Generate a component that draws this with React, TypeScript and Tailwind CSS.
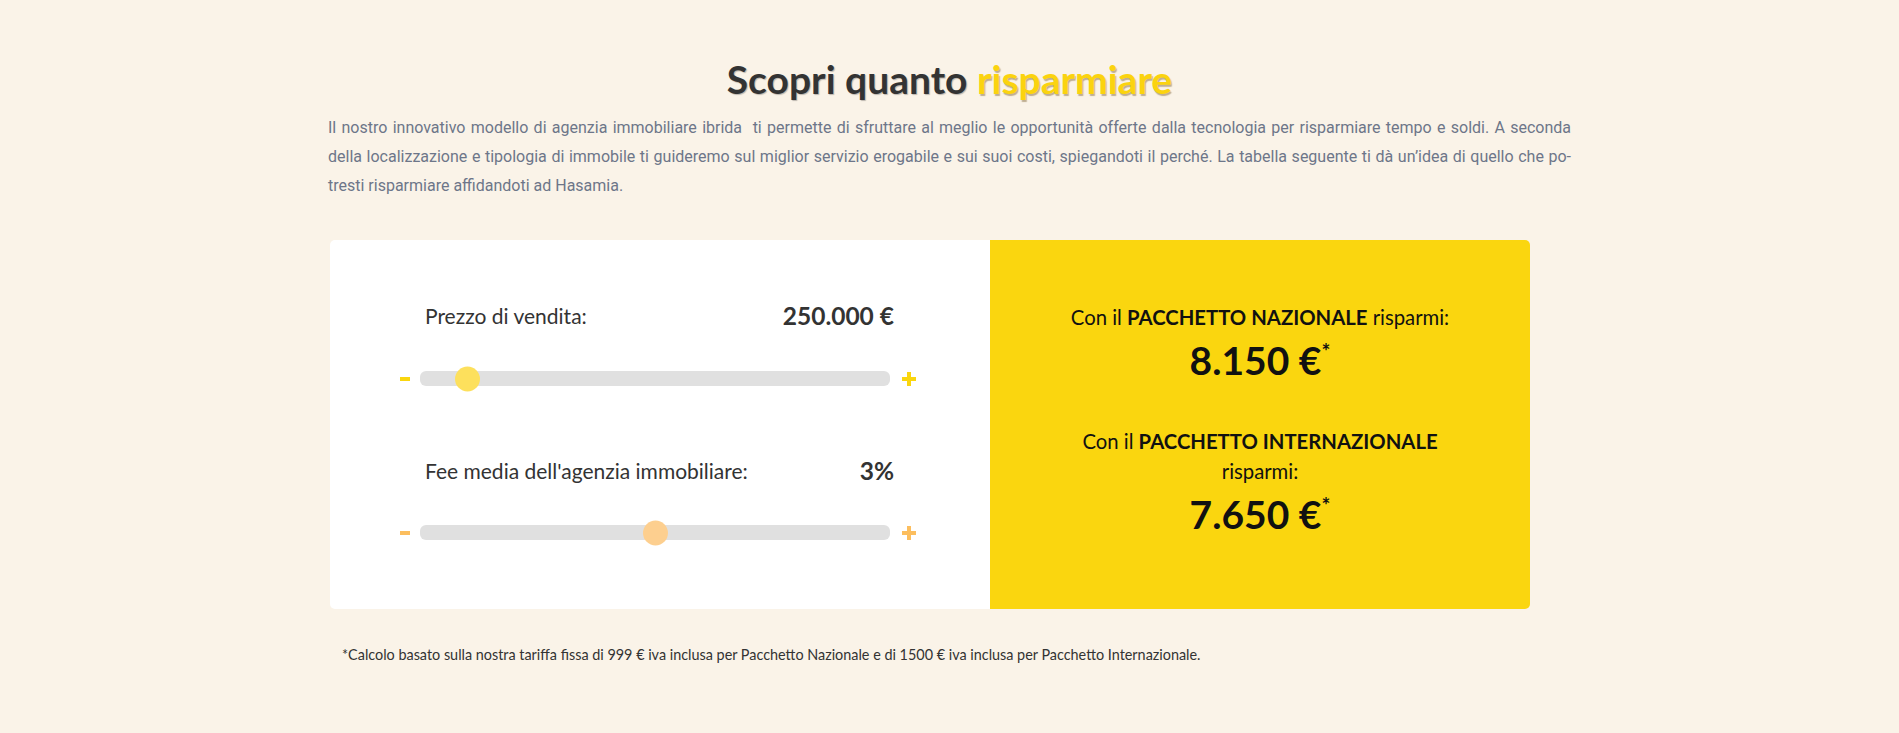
import React, { useState } from "react";

const ubuntu = "font-['Lato','Noto_Sans',sans-serif]";

const formatEuro = (n: number) => n.toLocaleString("it-IT").replace(/,/g, ".") + " €";

interface SliderProps {
  value: number;
  min: number;
  max: number;
  step: number;
  onChange: (v: number) => void;
  thumbClass: string;
  signClass: string;
}

const Slider: React.FC<SliderProps> = ({ value, min, max, step, onChange, thumbClass, signClass }) => {
  const pct = (value - min) / (max - min);
  return (
    <div className="flex items-center h-[25px]">
      <button
        type="button"
        onClick={() => onChange(Math.max(min, value - step))}
        className={`w-[20px] flex justify-start ${signClass}`}
      >
        <span className="block w-[10px] h-[4px] bg-current" />
      </button>
      <div className="relative flex-1 h-[15px] rounded-[6px] bg-[#e0e0e0]">
        <span
          className={`absolute top-1/2 -translate-y-1/2 w-[25px] h-[25px] rounded-full ${thumbClass}`}
          style={{ left: `calc(${pct} * (100% - 25px))` }}
        />
      </div>
      <button
        type="button"
        onClick={() => onChange(Math.min(max, value + step))}
        className={`w-[26px] flex justify-end ${signClass}`}
      >
        <span className="relative block w-[14px] h-[14px]">
          <span className="absolute left-0 top-[5px] w-[14px] h-[4px] bg-current" />
          <span className="absolute top-0 left-[5px] w-[4px] h-[14px] bg-current" />
        </span>
      </button>
    </div>
  );
};

export default function App() {
  const [price, setPrice] = useState(250000);
  const [fee, setFee] = useState(3);

  const gross = Math.round(price * (fee / 100) * 1.22);
  const nazionale = Math.floor((gross - 999) / 50) * 50;
  const internazionale = Math.floor((gross - 1500) / 50) * 50;

  return (
    <div className="min-h-[733px] bg-[#faf3e8] pt-[56px] pb-[60px]">
      <div className="w-[1243px] mx-auto">
        <h1
          className={`${ubuntu} text-center text-[39px] leading-[46px] font-bold text-[#333333] [text-shadow:1px_1px_1px_rgba(0,0,0,0.25)]`}
        >
          Scopri quanto{" "}
          <span className="text-[#fbd30f] [text-shadow:1px_2px_1px_rgba(120,90,40,0.45)]">risparmiare</span>
        </h1>
        <p className="mt-[11px] font-['Roboto',sans-serif] text-[16px] leading-[29px] text-[#6d7689] text-justify">
          Il nostro innovativo modello di agenzia immobiliare ibrida&nbsp; ti permette di sfruttare al meglio le
          opportunità offerte dalla tecnologia per risparmiare tempo e soldi. A seconda della localizzazione e
          tipologia di immobile ti guideremo sul miglior servizio erogabile e sui suoi costi, spiegandoti il perché. La
          tabella seguente ti dà un’idea di quello che po&shy;tresti risparmiare affidandoti ad Hasamia.
        </p>

        <div className={`${ubuntu} mt-[40px] ml-[2px] w-[1200px] h-[369px] flex rounded-[5px] overflow-hidden`}>
          {/* sliders */}
          <div className="w-[660px] bg-white flex flex-col pt-[61px] pl-[70px] pr-[74px]">
            <div className="flex items-center justify-between pl-[25px] pr-[22px] h-[30px]">
              <span className="text-[21px] text-[#333333]">Prezzo di vendita:</span>
              <span className="text-[24.5px] font-bold text-[#333333]">{formatEuro(price)}</span>
            </div>
            <div className="mt-[35px]">
              <Slider
                value={price}
                min={100000}
                max={2000000}
                step={10000}
                onChange={setPrice}
                thumbClass="bg-[#fde05c]"
                signClass="text-[#fad60f]"
              />
            </div>
            <div className="mt-[65px] flex items-center justify-between pl-[25px] pr-[22px] h-[30px]">
              <span className="text-[21px] text-[#333333]">Fee media dell'agenzia immobiliare:</span>
              <span className="text-[24.5px] font-bold text-[#333333]">{fee}%</span>
            </div>
            <div className="mt-[34px]">
              <Slider
                value={fee}
                min={1}
                max={5}
                step={0.5}
                onChange={setFee}
                thumbClass="bg-[#fdcf8f]"
                signClass="text-[#fcbe5e]"
              />
            </div>
          </div>

          {/* risultati */}
          <div className="flex-1 bg-[#fad60f] flex flex-col justify-center items-center px-[70px] pb-[10px] text-center text-[#111111]">
            <p className="text-[20.3px] leading-[30px]">
              Con il <b className="font-bold">PACCHETTO NAZIONALE</b> risparmi:
            </p>
            <p className="mt-[5px] text-[39px] leading-[46px] font-bold">
              {formatEuro(nazionale)}
              <sup className="text-[21px] top-[-0.75em]">*</sup>
            </p>
            <p className="mt-[43px] text-[20.3px] leading-[30px]">
              Con il <b className="font-bold">PACCHETTO INTERNAZIONALE</b> risparmi:
            </p>
            <p className="mt-[5px] text-[39px] leading-[46px] font-bold">
              {formatEuro(internazionale)}
              <sup className="text-[21px] top-[-0.75em]">*</sup>
            </p>
          </div>
        </div>

        <p className={`${ubuntu} mt-[35px] pl-[14px] text-[14.4px] text-[#333333]`}>
          *Calcolo basato sulla nostra tariffa fissa di 999 € iva inclusa per Pacchetto Nazionale e di 1500 € iva
          inclusa per Pacchetto Internazionale.
        </p>
      </div>
    </div>
  );
}
